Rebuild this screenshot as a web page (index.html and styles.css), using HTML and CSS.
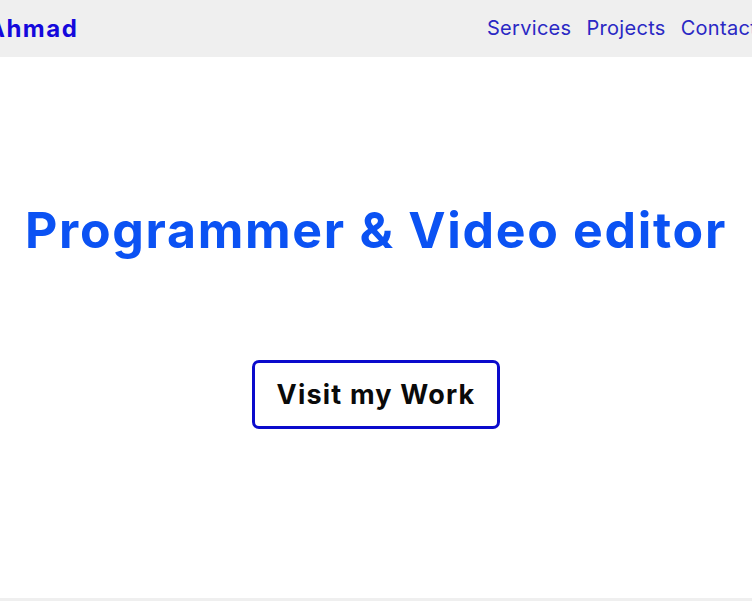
FILE: index.html
```html
<!DOCTYPE html>
<html lang="en">
<head>
<meta charset="utf-8">
<title>Ahmad</title>
<link rel="stylesheet" href="styles.css">
</head>
<body>
<div class="page">
  <header class="topbar">
    <a class="logo" href="#">Ahmad</a>
    <nav class="nav">
      <a href="#">Services</a>
      <a href="#">Projects</a>
      <a href="#">Contact</a>
    </nav>
  </header>
  <main class="hero">
    <h1 class="hero-title">Programmer &amp; Video editor</h1>
    <a class="hero-btn" href="#">Visit my Work</a>
  </main>
  <section class="next"></section>
</div>
</body>
</html>
```
FILE: styles.css
```css
* { box-sizing: border-box; }
html, body { margin: 0; padding: 0; }
body {
  font-family: "Inter", "Noto Sans", sans-serif;
  background: #fff;
  overflow: hidden;
}
.page { overflow: hidden; }
a { text-decoration: none; }
.topbar {
  height: 57px;
  background: #efefef;
  display: flex;
  align-items: center;
  justify-content: space-between;
  margin: 0 -5px 0 -13px;
  padding: 0 0 1px 0;
}
.logo {
  color: #1408dc;
  font-weight: 700;
  font-size: 24px;
  letter-spacing: 1.5px;
}
.nav {
  display: flex;
  gap: 15px;
}
.nav a {
  color: #2a28c4;
  font-size: 20px;
  font-weight: 400;
  letter-spacing: 0.3px;
}
.hero {
  height: 90vh;
  display: flex;
  flex-direction: column;
  align-items: center;
  padding-top: 140px;
}
.hero-title {
  margin: 0;
  color: #0b52f3;
  font-size: 50px;
  font-weight: 700;
  line-height: 66px;
  letter-spacing: 1.7px;
  white-space: nowrap;
}
.hero-btn {
  margin-top: 97px;
  width: 248px;
  height: 69px;
  border: 3px solid #0b0bcc;
  border-radius: 7px;
  display: flex;
  align-items: center;
  justify-content: center;
  color: #0a0a0a;
  font-size: 27px;
  font-weight: 700;
  letter-spacing: 1.2px;
}
.next {
  height: 200px;
  background: #efefef;
}
```
